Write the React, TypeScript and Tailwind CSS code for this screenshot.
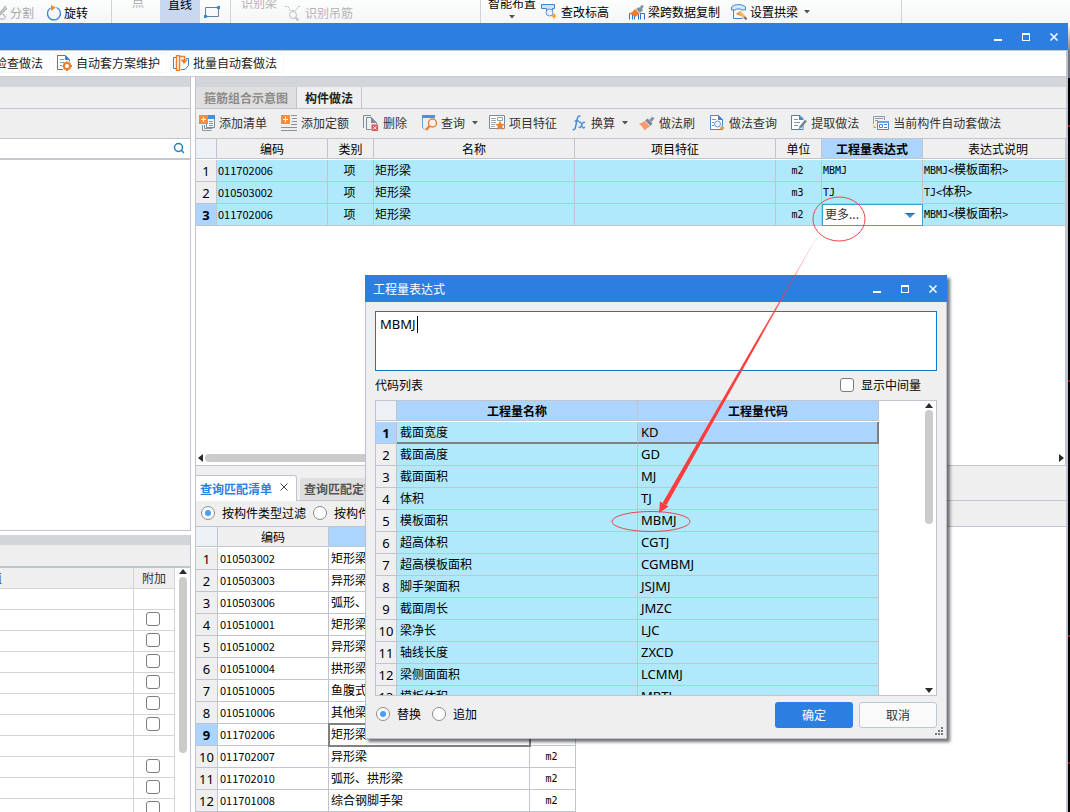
import React from 'react';
import { Search } from 'lucide-react';

interface ComponentRow {
  code: string;
  name: string;
  unit: string;
  expression: string;
  note: string;
}

const componentRows: ComponentRow[] = [
  { code: '011702006', name: '矩形梁', unit: 'm2', expression: 'MBMJ', note: 'MBMJ<模板面积>' },
  { code: '010503002', name: '矩形梁', unit: 'm3', expression: 'TJ', note: 'TJ<体积>' },
  { code: '011702006', name: '矩形梁', unit: 'm2', expression: '更多...', note: 'MBMJ<模板面积>' },
];

const matchRows = [
  { code: '010503002', name: '矩形梁', unit: 'm3' },
  { code: '010503003', name: '异形梁', unit: 'm3' },
  { code: '010503006', name: '弧形、拱形梁', unit: 'm3' },
  { code: '010510001', name: '矩形梁', unit: 'm3' },
  { code: '010510002', name: '异形梁', unit: 'm3' },
  { code: '010510004', name: '拱形梁', unit: 'm3' },
  { code: '010510005', name: '鱼腹式吊车梁', unit: 'm3' },
  { code: '010510006', name: '其他梁', unit: 'm3' },
  { code: '011702006', name: '矩形梁', unit: 'm2' },
  { code: '011702007', name: '异形梁', unit: 'm2' },
  { code: '011702010', name: '弧形、拱形梁', unit: 'm2' },
  { code: '011701008', name: '综合钢脚手架', unit: 'm2' },
];

const codeRows = [
  ['截面宽度', 'KD'],
  ['截面高度', 'GD'],
  ['截面面积', 'MJ'],
  ['体积', 'TJ'],
  ['模板面积', 'MBMJ'],
  ['超高体积', 'CGTJ'],
  ['超高模板面积', 'CGMBMJ'],
  ['脚手架面积', 'JSJMJ'],
  ['截面周长', 'JMZC'],
  ['梁净长', 'LJC'],
  ['轴线长度', 'ZXCD'],
  ['梁侧面面积', 'LCMMJ'],
  ['模板体积', 'MBTJ'],
];

// Rows of the attribute table, true where the row has a tick box
const attachRows = [false, true, true, true, true, true, true, false, true, true, true];

// Half-width characters get the fixed-width face, the rest stays in the CJK face
const GridText: React.FC<{ text: string }> = ({ text }) => (
  <>
    {text.split(/([\x20-\x7e]+)/).map((part, i) =>
      i % 2 === 1 ? (
        <span key={i} className="font-['DejaVu_Sans_Mono',monospace] text-[10px]">
          {part}
        </span>
      ) : (
        part
      )
    )}
  </>
);

const Caret: React.FC = () => (
  <svg width="6" height="4" viewBox="0 0 6 4" className="shrink-0">
    <path d="M0 0h6L3 3.5z" fill="#555" />
  </svg>
);

const Arrow: React.FC<{ dir: 'up' | 'down' | 'left' | 'right' }> = ({ dir }) => {
  const paths = {
    up: 'M0 6L4 1l4 5z',
    down: 'M0 2h8L4 7z',
    left: 'M6 0v8L1 4z',
    right: 'M2 0v8l5-4z',
  };
  return (
    <svg width="8" height="8" viewBox="0 0 8 8" className="shrink-0">
      <path d={paths[dir]} fill="#2b2b2b" />
    </svg>
  );
};

const Icon: React.FC<{ children: React.ReactNode }> = ({ children }) => (
  <svg width="16" height="16" viewBox="0 0 16 16" fill="none" className="shrink-0">
    {children}
  </svg>
);

const AddListIcon = () => (
  <Icon>
    <path d="M5.500 10v3.500h8M3.500 10v5.500h9" stroke="#8a97a5" />
    <path d="M7.500 3.500h8v9h-8z" stroke="#7d8b99" fill="#f4f6f8" />
    <path d="M9 0h7v4H9z" fill="#4a8fdc" />
    <path d="M10 6.500h4M10 8.500h4M10 10.500h4" stroke="#8a97a5" />
    <path d="M0 0h9v9H0z" fill="#ee8f45" />
    <path d="M4.500 2v5M2 4.500h5" stroke="#fff" />
  </Icon>
);

const AddQuotaIcon = () => (
  <Icon>
    <path d="M10 .5h6M11 3.500h5M11 6.500h5M10 9.500h6M0 12.500h16M0 15.500h16" stroke="#8494a3" />
    <path d="M0 0h9v9H0z" fill="#ee8f45" />
    <path d="M4.500 2v5M2 4.500h5" stroke="#fff" />
  </Icon>
);

const DeleteIcon = () => (
  <Icon>
    <path d="M.5 13V.5H8M8 14.500H3.500v-12h5L13.500 8v1" stroke="#7f8c99" />
    <path d="M8 2v6h6z" fill="#7f8c99" />
    <path d="M8.500 9.500H15V16H8.500z" fill="#d65757" />
    <path d="M10 11l3.500 3.500M13.500 11L10 14.500" stroke="#fff" />
  </Icon>
);

const QueryIcon = () => (
  <Icon>
    <path d="M1.500 1v11.500l2 1.500" stroke="#6f9fd0" />
    <path d="M1 0h13v3H1z" fill="#4b8fdd" />
    <circle cx="11.500" cy="8" r="4" stroke="#ea8235" strokeWidth="1.500" fill="#fdf3ea" />
    <path d="M8.500 11L5 15" stroke="#ea8235" strokeWidth="2.500" />
  </Icon>
);

const FeatureIcon = () => (
  <Icon>
    <path d="M.5.5h15v13H.5z" stroke="#7c8a97" fill="#fff" />
    <path d="M2 3.500h5M2 5.500h5M2 7.500h5M2 9.500h4M2 11.500h4" stroke="#9aa5b0" />
    <path d="M8.500 2.500h5v3h-5z" stroke="#8aa59b" />
    <path d="M11 5.500l1.400 3.200 3.600.3-2.700 2.300.8 3.600-3.100-1.900L7.900 15l.8-3.700L6 9l3.600-.3z" fill="#f0812d" />
  </Icon>
);

const FxIcon = () => (
  <Icon>
    <path d="M9.500 1.500C7.500 0 6.600 2 6.200 4L4.500 12c-.5 2.500-1.600 3.300-3 2.400M3.500 6H8" stroke="#4a8bd8" strokeWidth="1.500" />
    <path d="M8 7.500c2-1.500 2.200.5 2.800 2.800.7 2.500 1.300 3.700 3 1.700M14 7.500c-2-1-2.800 1.500-3.500 3-.8 1.700-1.500 2.700-3 1.500" stroke="#4a8bd8" strokeWidth="1.300" />
  </Icon>
);

const BrushIcon = () => (
  <Icon>
    <path d="M13.500 1.500l2 2-3 3.500-2.500-2z" fill="#8695a2" />
    <path d="M8.500 3.500l5 5-2 2.500-5.500-5.500z" fill="#798894" />
    <path d="M5.500 6L11 11.500C8.500 13 7 13.500 6 15.500L0 8c2 .3 4-.5 5.500-2z" fill="#fb9968" />
  </Icon>
);

const DocSearchIcon = () => (
  <Icon>
    <path d="M1.500.5h8l4 4v10h-12z" stroke="#4586d0" fill="#fff" />
    <path d="M9 0v5h5z" fill="#4586d0" />
    <path d="M3 4.500h4M3 7.500h2M3 10.500h2" stroke="#7d93aa" />
    <circle cx="8.500" cy="9" r="3" stroke="#6b95c8" fill="#edf3fb" />
    <path d="M13 10l1 2 2 1-2 1-1 2-1-2-2-1 2-1z" fill="#f29a1f" />
  </Icon>
);

const DocPenIcon = () => (
  <Icon>
    <path d="M12 9v5.500H.5V.5H9L12.500 4" stroke="#4a7fb8" fill="#fff" />
    <path d="M8 0v5h5z" fill="#4586d0" />
    <path d="M3 4.500h4M3 7.500h6M3 10.500h4" stroke="#8794a2" />
    <path d="M15 5.500l-6 7" stroke="#75818e" strokeWidth="2.500" />
    <path d="M9.500 11.500L8 15" stroke="#36b3c8" strokeWidth="1.500" />
  </Icon>
);

const WindowsIcon = () => (
  <Icon>
    <path d="M.5 9V1.500h11V5M2 3.500h8M2 5.500h3" stroke="#8c99a6" />
    <path d="M4.500 6.500h11v8h-11z" stroke="#4586d0" fill="#fff" />
    <path d="M4 6h12v2H4z" fill="#6fa3e0" />
    <path d="M6.500 9.500h3v3h-3zM11 9.500h3M11 12.500h3" stroke="#4586d0" />
    <path d="M1 10.500v2h2" stroke="#ee8235" />
  </Icon>
);

const DocGearIcon = () => (
  <Icon>
    <path d="M1.500 0v14.500H7M1 .5h8.500l4 4v2" stroke="#3f7fcb" />
    <path d="M9 0v5h5z" fill="#3f7fcb" />
    <path d="M4 4.500h4M4 7.500h4M4 10.500h2" stroke="#8a97a6" />
    <circle cx="11" cy="11" r="3" stroke="#f07c2a" strokeWidth="2" />
    <path d="M11 6.500v2M11 13.500V16M6.500 11h2M13.500 11H16M8 8l1 1M13 13l1 1M14 8l-1 1M9 13l-1 1" stroke="#f07c2a" strokeWidth="2" />
  </Icon>
);

const BatchIcon = () => (
  <Icon>
    <path d="M3 2.500H.5v11H3M13 3.500h2.500v7L12 14.500H8" stroke="#3f82cd" />
    <path d="M3.500.5h3v15h-3z" stroke="#f07c2a" fill="#fff" strokeWidth="1.500" />
    <path d="M6 1.500h5.500V6" stroke="#f07c2a" strokeWidth="1.500" />
    <path d="M7.500 4.500H15L11 9z" fill="#f07c2a" />
  </Icon>
);

const RibbonBrushIcon = () => (
  <Icon>
    <path d="M.5 15.500v-6h3v6M5.500 15.500v-5h4v5M11.500 15.500v-6h4v6" stroke="#2f73b8" />
    <path d="M12 1l3 1-2 3 1 1-3 3-4-4 3-2 1 1z" fill="#84929e" />
    <path d="M6 5l5 5c-2 .5-3 2-5 3L0 9c3 0 4-2 6-4z" fill="#f17a2b" />
  </Icon>
);

const LevelIcon = () => (
  <Icon>
    <path d="M.5.5h13v4h-2v5h-6v-5h-5z" stroke="#3e84d2" fill="#cfe2f8" />
    <circle cx="8.500" cy="8.500" r="3.500" stroke="#5c95d6" fill="#e8f1fc" />
    <path d="M13 9l1 2 2 1-2 1-1 2.500-1-2.500-2-1 2-1z" fill="#f5a11e" />
  </Icon>
);

const ArchIcon = () => (
  <Icon>
    <path d="M.5 6V3C4-.2 11-.2 14.500 3v3H11c-2-1.500-5-1.500-7 0z" stroke="#3e84d2" fill="#d6e7fa" />
    <path d="M2.500 6v8.500h9" stroke="#3e84d2" />
    <path d="M5 10l4-3 1 5z" fill="#ee7a33" />
    <path d="M8 7.500l6.500 7" stroke="#f3b562" strokeWidth="3" />
    <path d="M13.500 13l2 2.500" stroke="#6b6b6b" strokeWidth="2" />
  </Icon>
);

const RotateIcon = () => (
  <Icon>
    <path d="M10.500 2.500a6.500 6.500 0 1 1-6 .5" stroke="#3d86d6" strokeWidth="1.300" />
    <path d="M5 0l5 2.500L5 6z" fill="#f08a24" />
  </Icon>
);

const SplitIcon = () => (
  <Icon>
    <path d="M14 1L6 10l-3 4M11 9l3 4M5 14h8M15 3L8 10" stroke="#ababab" strokeWidth="1.200" />
  </Icon>
);

const RebarIcon = () => (
  <Icon>
    <path d="M0 1.500h3l2 4h6l2-4h3" stroke="#c0c0c0" strokeDasharray="2 1" />
    <circle cx="8" cy="10" r="3.500" stroke="#c0c0c0" />
    <path d="M10.500 12.500l3 3" stroke="#c0c0c0" strokeWidth="2" />
  </Icon>
);

const toolItems = [
  { label: '添加清单', icon: <AddListIcon /> },
  { label: '添加定额', icon: <AddQuotaIcon /> },
  { label: '删除', icon: <DeleteIcon /> },
  { label: '查询', icon: <QueryIcon />, menu: true },
  { label: '项目特征', icon: <FeatureIcon /> },
  { label: '换算', icon: <FxIcon />, menu: true },
  { label: '做法刷', icon: <BrushIcon /> },
  { label: '做法查询', icon: <DocSearchIcon /> },
  { label: '提取做法', icon: <DocPenIcon /> },
  { label: '当前构件自动套做法', icon: <WindowsIcon /> },
];

const WindowControls: React.FC = () => (
  <div className="flex items-center gap-5">
    <button aria-label="最小化" className="flex h-4 w-2 items-center">
      <svg width="8" height="8" viewBox="0 0 8 8"><path d="M0 6h8v2H0z" fill="#fff" /></svg>
    </button>
    <button aria-label="最大化" className="flex h-4 w-2 items-center">
      <svg width="8" height="8" viewBox="0 0 8 8"><path d="M0 0h8v8H0zM1 2v5h6V2z" fill="#fff" fillRule="evenodd" /></svg>
    </button>
    <button aria-label="关闭" className="flex h-4 w-2 items-center">
      <svg width="8" height="8" viewBox="0 0 8 8"><path d="M.5.5l7 7M7.500.5l-7 7" stroke="#fff" strokeWidth="1.500" /></svg>
    </button>
  </div>
);

const radioClass =
  "relative size-[14px] shrink-0 appearance-none rounded-full border border-[#8a8a8a] bg-white checked:before:absolute checked:before:inset-[3px] checked:before:rounded-full checked:before:bg-[#4a9df8] checked:before:content-['']";
const checkClass = 'size-[14px] shrink-0 appearance-none rounded-[3px] border border-[#7d7d7d] bg-white';
const headCell = 'h-5 border-b border-r border-[#c0c4cf] p-0 text-center font-normal';
const numCell = "h-[22px] border-b border-r border-[#c0c4cc] p-0 text-center font-['Noto_Sans',sans-serif] text-[13px] leading-4";
const dataCell = 'h-[22px] overflow-hidden whitespace-nowrap border-b border-r border-[#c0c4cc] p-0 pb-0.5 leading-4';

const Ribbon: React.FC = () => (
  <div className="flex h-[23px] shrink-0 overflow-hidden bg-gradient-to-b from-[#fcfdfd] to-[#f4f7f6] leading-[14px] text-black">
    <div className="flex w-28 shrink-0 items-start border-r border-[#cfd2d6] pt-[5px]">
      <button className="-ml-2 flex items-center gap-0.5 text-[#a9a9a9]">
        <SplitIcon />
        分割
      </button>
      <button className="ml-3 flex items-center gap-0.5">
        <RotateIcon />
        旋转
      </button>
    </div>
    <div className="flex w-[119px] shrink-0 items-start border-r border-[#cfd2d6]">
      <button className="w-12 pl-1 leading-[4px] text-[#a9a9a9]">点</button>
      <button className="h-full w-10 bg-[#c8d8f0] pb-4 leading-[6px]">直线</button>
      <button aria-label="矩形" className="ml-1 mt-1">
        <Icon>
          <path d="M1.500 3.500h13v9h-13z" stroke="#6b7f93" />
          <path d="M0 11h3v3H0zM13 2h3v3h-3z" fill="#3c86d8" />
        </Icon>
      </button>
    </div>
    <div className="flex w-[250px] shrink-0 items-start border-r border-[#cfd2d6] pl-[10px] text-[#b3b3b3]">
      <button className="leading-[6px]">识别梁</button>
      <button className="ml-2 mt-[5px] flex items-center gap-1">
        <RebarIcon />
        识别吊筋
      </button>
    </div>
    <div className="flex min-w-[421px] items-start border-r border-[#cfd2d6] pl-[7px]">
      <button className="flex flex-col items-center gap-[9px] leading-[6px]">
        智能布置
        <Caret />
      </button>
      <button className="ml-[5px] mt-1 flex items-center gap-1">
        <LevelIcon />
        查改标高
      </button>
      <button className="ml-5 mt-1 flex items-center gap-[3px]">
        <RibbonBrushIcon />
        梁跨数据复制
      </button>
      <button className="ml-[11px] mt-1 flex items-center gap-[3px]">
        <ArchIcon />
        设置拱梁
        <span className="ml-[3px]"><Caret /></span>
      </button>
    </div>
  </div>
);

const LeftPane: React.FC = () => (
  <div className="flex w-[191px] shrink-0 flex-col">
    <div className="flex h-[454px] shrink-0 flex-col border-b border-r border-[#c0c4cc] bg-white">
      <div className="h-[10px] shrink-0 bg-[#d4d5da]" />
      <div className="h-[22px] shrink-0 border-b border-[#c0c4cc] bg-[#efefef]" />
      <div className="h-[30px] shrink-0 border-b border-[#c0c4cc] bg-[#efefef]" />
      <label className="flex h-[21px] shrink-0 items-center border-b-2 border-[#c5c8ce] pb-0.5 pr-[5px]">
        <input type="text" aria-label="搜索构件" className="h-4 min-w-0 flex-1 outline-none" />
        <Search size={12} strokeWidth={3} color="#2280bd" />
      </label>
    </div>
    <div className="h-1 shrink-0" />
    <div className="h-[10px] shrink-0 border-r border-[#c0c4cc] bg-[#d4d5da]" />
    <div className="h-[23px] shrink-0 border-b-2 border-r border-[#c0c4cc] bg-[#efefef]" />
    <div className="flex min-h-0 flex-1 border-r border-[#c0c4cc]">
      <div className="flex-1 overflow-hidden">
        <table className="w-full table-fixed border-separate border-spacing-0">
          <colgroup>
            <col />
            <col className="w-[41px]" />
          </colgroup>
          <thead>
            <tr>
              <th className="h-[21px] border-b border-r border-[#d3d4d8] bg-[#efefef] p-0 font-normal text-[#30357c]">
                <div className="flex w-[2px] justify-end overflow-hidden">值</div>
              </th>
              <th className="h-[21px] border-b border-r border-[#d3d4d8] bg-[#efefef] p-0 font-normal text-[#333]">附加</th>
            </tr>
          </thead>
          <tbody>
            {attachRows.map((hasBox, i) => (
              <tr key={i}>
                <td className="h-[21px] border-b border-r border-[#d3d4d8] p-0" />
                <td className="h-[21px] border-b border-r border-[#d3d4d8] p-0">
                  {hasBox && (
                    <div className="flex justify-center pb-0.5 pr-[3px]">
                      <input type="checkbox" aria-label="附加" className={checkClass} />
                    </div>
                  )}
                </td>
              </tr>
            ))}
          </tbody>
        </table>
      </div>
      <div className="flex w-[15px] flex-col items-center gap-px">
        <Arrow dir="up" />
        <div className="h-[176px] w-2 shrink-0 rounded-full bg-[#cbcbcb]" />
      </div>
    </div>
  </div>
);

const ComponentTable: React.FC = () => (
  <table className="w-full table-fixed border-separate border-spacing-0">
    <colgroup>
      <col className="w-[21px]" />
      <col className="w-[111px]" />
      <col className="w-[46px]" />
      <col className="w-[201px]" />
      <col className="w-[201px]" />
      <col className="w-[46px]" />
      <col className="w-[101px]" />
      <col />
    </colgroup>
    <thead>
      <tr>
        <th className={`${headCell} bg-[#edf1f6]`} />
        {['编码', '类别', '名称', '项目特征', '单位'].map((title) => (
          <th key={title} className={`${headCell} bg-[#efefef]`}>{title}</th>
        ))}
        <th className="h-5 border-b border-r border-[#c0c4cf] bg-[#abd5ff] p-0 text-center font-bold">工程量表达式</th>
        <th className="h-5 border-b border-[#c0c4cf] bg-[#efefef] p-0 pl-2 text-center font-normal">表达式说明</th>
      </tr>
      <tr><th colSpan={8} className="h-px bg-white p-0" /></tr>
    </thead>
    <tbody className="bg-[#afe9fb]">
      {componentRows.map((row, i) => (
        <tr key={i}>
          <td className={`${numCell} ${i === 2 ? 'bg-[#abd5ff] font-bold' : 'bg-[#efefef]'}`}>{i + 1}</td>
          <td className={`${dataCell} pl-px text-[11px]`}>{row.code}</td>
          <td className={`${dataCell} pr-0.5 text-center`}>项</td>
          <td className={`${dataCell} pl-px`}>{row.name}</td>
          <td className={dataCell} />
          <td className={`${dataCell} pr-0.5 text-center`}><GridText text={row.unit} /></td>
          {i === 2 ? (
            <td className="h-[22px] border border-[#3ba3cf] bg-white p-0">
              <div className="relative flex items-center">
                <select aria-label="工程量表达式" className="h-5 w-full appearance-none bg-white pb-0.5 pl-0.5 text-[#333] outline-none">
                  <option>{row.expression}</option>
                </select>
                <svg width="10" height="5" viewBox="0 0 10 5" className="pointer-events-none absolute right-[7px]">
                  <path d="M0 0h10L5 5z" fill="#3c8ccc" />
                  <path d="M0 0h10L9 1H1z" fill="#24638f" />
                </svg>
              </div>
            </td>
          ) : (
            <td className={`${dataCell} pl-px`}><GridText text={row.expression} /></td>
          )}
          <td className="h-[22px] whitespace-nowrap border-b border-[#c0c4cc] p-0 pb-0.5 pl-px leading-4"><GridText text={row.note} /></td>
        </tr>
      ))}
    </tbody>
  </table>
);

const MatchTable: React.FC = () => (
  <table className="w-[380px] table-fixed border-separate border-spacing-0">
    <colgroup>
      <col className="w-[22px]" />
      <col className="w-[111px]" />
      <col className="w-[201px]" />
      <col className="w-[46px]" />
    </colgroup>
    <thead>
      <tr>
        <th className={`${headCell} bg-[#edf1f6]`} />
        <th className={`${headCell} bg-[#efefef]`}>编码</th>
        <th className="h-5 border-b border-r border-[#c0c4cf] bg-[#abd5ff] p-0 font-bold">名称</th>
        <th className={`${headCell} bg-[#efefef]`}>单位</th>
      </tr>
      <tr><th colSpan={4} className="h-px p-0" /></tr>
    </thead>
    <tbody>
      {matchRows.map((row, i) => (
        <tr key={row.code}>
          <td className={`${numCell} ${i === 8 ? 'bg-[#abd5ff] font-bold' : 'bg-[#efefef]'}`}>{i + 1}</td>
          <td className={`${dataCell} pl-0.5 text-[11px]`}>{row.code}</td>
          <td className={`${dataCell} pl-0.5 ${i === 8 ? 'outline-2 -outline-offset-1 outline-[#808080]' : ''}`}>{row.name}</td>
          <td className={`${dataCell} pr-0.5 text-center`}><GridText text={row.unit} /></td>
        </tr>
      ))}
    </tbody>
  </table>
);

const RightPane: React.FC = () => (
  <div className="flex min-w-0 flex-1 flex-col border-l border-[#c0c4cc]">
    <div className="h-[10px] shrink-0 bg-[#d4d5da]" />
    <div className="flex h-[22px] shrink-0 border-b border-[#c0c4cc] bg-[#efefef]">
      <button className="w-[101px] border-r border-[#c0c4cc] bg-[#dfdfdf] font-bold text-[#8c8c8c]">箍筋组合示意图</button>
      <button className="w-[65px] border-r border-[#c0c4cc] font-bold text-[#222]">构件做法</button>
    </div>
    <div className="flex h-[30px] shrink-0 items-center overflow-hidden border-b border-[#c0c4cc] bg-[#efefef] pb-0.5 pl-[3px] text-[#333]">
      {toolItems.map((item) => (
        <button
          key={item.label}
          className={`flex shrink-0 items-center gap-1 ${item.menu ? 'mr-[11px]' : 'mr-[14px]'}`}
        >
          {item.icon}
          {item.label}
          {item.menu && <span className="ml-[3px]"><Caret /></span>}
        </button>
      ))}
    </div>
    <div className="flex h-[327px] shrink-0 flex-col justify-between border-b border-r border-[#c0c4cc]">
      <ComponentTable />
      <div className="flex h-[14px] items-center pl-px">
        <Arrow dir="left" />
        <div className="h-2 w-[420px] rounded-full bg-[#cbcbcb]" />
        <span className="ml-auto"><Arrow dir="right" /></span>
      </div>
    </div>
    <div className="h-[9px] shrink-0 bg-[#efefef]" />
    <div className="flex h-[26px] shrink-0 items-end bg-[#efefef]">
      <div className="flex h-full w-[101px] items-center gap-2 rounded-tr-[3px] border-r border-t border-[#c0c4cc] bg-white pl-1 font-bold text-[#2b80e2]">
        <button>查询匹配清单</button>
        <button aria-label="关闭标签" className="pb-1">
          <svg width="8" height="8" viewBox="0 0 8 8"><path d="M.5.5l7 7M7.500.5l-7 7" stroke="#444" /></svg>
        </button>
      </div>
      <div className="flex h-full flex-1 items-end border-b border-[#c0c4cc] pl-[3px]">
        <button className="h-[22px] w-[101px] rounded-t-[3px] bg-[#dfdfdf] pl-1 text-left font-bold text-[#555]">查询匹配定额</button>
      </div>
    </div>
    <div className="flex h-[26px] shrink-0 items-center border-b border-[#c0c4cc] bg-[#efefef] pb-0.5 pl-[5px]">
      <label className="flex items-center gap-[7px]">
        <input type="radio" name="filter" defaultChecked className={radioClass} />
        按构件类型过滤
      </label>
      <label className="ml-[7px] flex items-center gap-[7px]">
        <input type="radio" name="filter" className={radioClass} />
        按构件属性过滤
      </label>
    </div>
    <div className="min-h-0 flex-1 overflow-hidden">
      <MatchTable />
    </div>
  </div>
);

const ExpressionDialog: React.FC = () => (
  <section
    role="dialog"
    aria-label="工程量表达式"
    className="absolute left-[365px] top-[275px] w-[582px] bg-[#efefef] shadow-[3px_3px_3px_rgba(0,0,0,0.55)]"
  >
    <header className="flex h-[27px] items-center justify-between bg-[#2c7fe1] pl-2 pr-[10px] text-white">
      <h2>工程量表达式</h2>
      <WindowControls />
    </header>
    <div className="border-x border-b border-[#bcc2ce] px-[9px] pb-[10px] pt-[9px]">
      <div className="relative">
        <textarea
          aria-label="表达式"
          defaultValue="MBMJ"
          className="block h-[60px] w-full resize-none border border-[#0f7ad0] bg-white px-1 py-1 font-['Noto_Sans',sans-serif] text-[13px] leading-4 outline-none"
        />
        <span className="absolute left-[42px] top-[5px] h-[17px] w-px bg-black" />
      </div>
      <div className="flex h-[29px] items-center justify-between pb-0.5 pr-4">
        <span>代码列表</span>
        <label className="flex items-center gap-[7px]">
          <input type="checkbox" className={checkClass} />
          显示中间量
        </label>
      </div>
      <div className="flex h-[296px] overflow-hidden border border-[#c0c4cc] bg-white">
        <table className="w-[503px] shrink-0 table-fixed self-start border-separate border-spacing-0">
          <colgroup>
            <col className="w-[21px]" />
            <col className="w-[241px]" />
            <col className="w-[241px]" />
          </colgroup>
          <thead>
            <tr className="font-bold">
              <th className={`${headCell} bg-[#edf1f6]`} />
              <th className="h-5 border-b border-r border-[#c0c4cf] bg-[#abd5ff] p-0">工程量名称</th>
              <th className="h-5 border-b border-r border-[#c0c4cf] bg-[#abd5ff] p-0">工程量代码</th>
            </tr>
            <tr><th colSpan={3} className="h-px p-0" /></tr>
          </thead>
          <tbody className="bg-[#afe9fb]">
            {codeRows.map(([name, code], i) => (
              <tr key={code}>
                <td className={`${numCell} ${i === 0 ? 'bg-[#abd5ff] font-bold' : 'bg-[#efefef]'}`}>{i + 1}</td>
                <td className={`h-[22px] border-r p-0 pl-[3px] leading-4 border-r-[#c0c4cc] ${i === 0 ? 'border-b-2 border-b-[#808080]' : 'border-b border-b-[#c0c4cc] pb-0.5'}`}>
                  {name}
                </td>
                <td
                  className={`h-[22px] p-0 pl-[3px] font-['Noto_Sans',sans-serif] text-[13px] leading-4 ${
                    i === 0 ? 'border-b-2 border-r-2 border-[#808080] bg-[#abd5ff]' : 'border-b border-r border-[#c0c4cc] pb-0.5'
                  }`}
                >
                  {code}
                </td>
              </tr>
            ))}
          </tbody>
        </table>
        <div className="ml-auto flex w-[14px] flex-col items-center justify-between py-px">
          <div className="flex flex-col items-center">
            <Arrow dir="up" />
            <div className="h-[114px] w-2 rounded-full bg-[#cbcbcb]" />
          </div>
          <Arrow dir="down" />
        </div>
      </div>
      <div className="flex items-center justify-between pt-[6px]">
        <div className="flex gap-[11px] pb-0.5 pl-px">
          <label className="flex items-center gap-[7px]">
            <input type="radio" name="mode" defaultChecked className={radioClass} />
            替换
          </label>
          <label className="flex items-center gap-[7px]">
            <input type="radio" name="mode" className={radioClass} />
            追加
          </label>
        </div>
        <div className="flex gap-[6px]">
          <button className="h-[26px] w-[78px] rounded-[3px] bg-[#2c7fe1] text-white">确定</button>
          <button className="h-[26px] w-[78px] rounded-[3px] border border-[#bfc6d8] bg-[#fafafa] text-[#333]">取消</button>
        </div>
      </div>
    </div>
    <svg width="8" height="8" viewBox="0 0 8 8" className="absolute bottom-1 right-1">
      <path d="M6 0h2v2H6zM3 3h2v2H3zM6 3h2v2H6zM0 6h2v2H0zM3 6h2v2H3zM6 6h2v2H6z" fill="#757b83" />
    </svg>
  </section>
);

// Red marks that link the drop-down cell to its code in the dialog
const Annotation: React.FC = () => (
  <svg width="1070" height="812" viewBox="0 0 1070 812" fill="none" className="pointer-events-none absolute left-0 top-0">
    <defs>
      <linearGradient id="tail" x1="816" y1="238" x2="760" y2="338" gradientUnits="userSpaceOnUse">
        <stop offset="0" stopColor="#ff3b3b" stopOpacity="0.200" />
        <stop offset="1" stopColor="#ff3b3b" />
      </linearGradient>
    </defs>
    <ellipse cx="839" cy="219" rx="26" ry="22" stroke="#f04848" />
    <ellipse cx="651" cy="521.500" rx="39" ry="10" stroke="#e04a50" />
    <path d="M816.500 238L666.500 505L662.500 503L816 238z" fill="url(#tail)" />
    <path d="M659 513L660 501.500L668.500 506.500z" fill="#ff3b3b" />
  </svg>
);

const App: React.FC = () => (
  <div className="relative flex h-screen flex-col overflow-hidden bg-white font-['Noto_Sans_CJK_SC',sans-serif] text-xs leading-4 text-black">
    <Ribbon />
    <div className="flex min-h-0 flex-1">
      <div className="flex min-w-0 flex-1 flex-col">
        <header className="flex h-[27px] shrink-0 items-center justify-end bg-[#2c7fe1] pr-[10px]">
          <WindowControls />
        </header>
        <div className="flex min-h-0 flex-1 flex-col border-r-2 border-[#bfc3cf]">
          <div className="flex h-[27px] shrink-0 items-center gap-[3px] border-b border-t border-[#c8cbd0] bg-white pb-0.5 text-[#222]">
            <button className="-ml-[6px] h-5 w-14 rounded-[3px] border border-[#f7f7f7] text-left">检查做法</button>
            <button className="flex h-5 items-center gap-1 rounded-[3px] border border-[#f7f7f7] pl-0.5 pr-[6px]">
              <DocGearIcon />
              自动套方案维护
            </button>
            <button className="flex h-5 items-center gap-1 rounded-[3px] border border-[#f7f7f7] pl-0.5 pr-[6px]">
              <BatchIcon />
              批量自动套做法
            </button>
          </div>
          <div className="flex min-h-0 flex-1 gap-1">
            <LeftPane />
            <RightPane />
          </div>
        </div>
      </div>
      <div className="flex w-[2px] shrink-0 flex-col bg-black">
        <div className="h-[27px] shrink-0 bg-gradient-to-b from-white to-[#8a8a8a]" />
        <div className="h-[28px] shrink-0 bg-[#6f737c]" />
        <div className="mt-[47px] h-0.5 shrink-0 bg-[#8e1010]" />
        <div className="mt-[253px] h-0.5 shrink-0 bg-[#8e1010]" />
        <div className="mt-[253px] h-0.5 shrink-0 bg-[#8e1010]" />
        <div className="mt-[125px] h-0.5 shrink-0 bg-[#8e1010]" />
      </div>
    </div>
    <ExpressionDialog />
    <Annotation />
  </div>
);

export default App;
